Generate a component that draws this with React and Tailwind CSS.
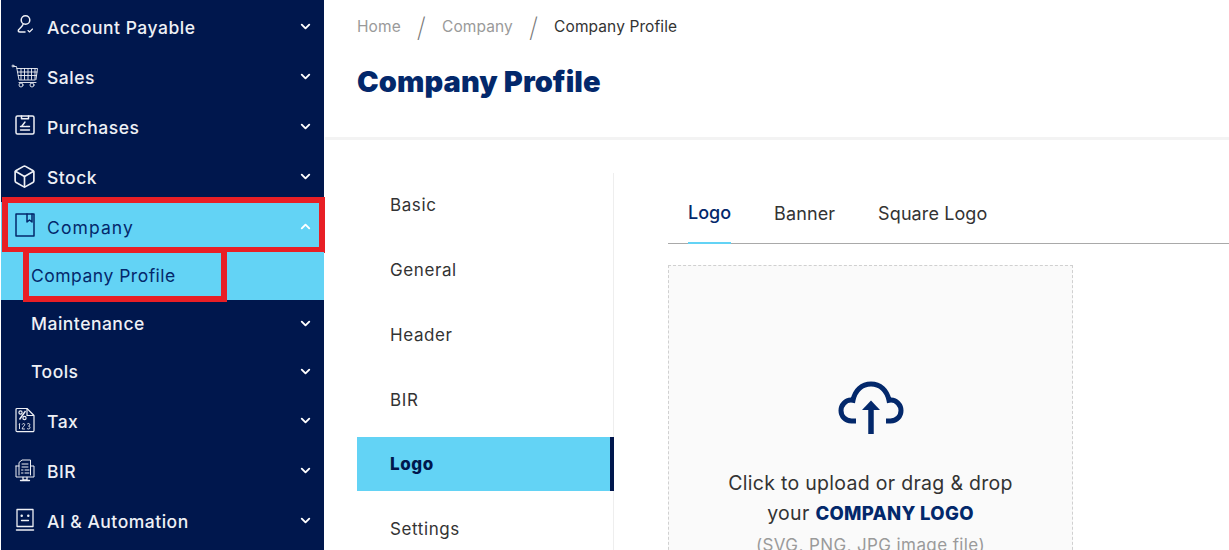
import React from "react";
import { ChevronDown, ChevronUp, Box } from "lucide-react";

const I = ({ children, w = 24, h = 24, vb = "0 0 24 24", sw = 1.5 }) => (
  <svg width={w} height={h} viewBox={vb} fill="none" stroke="currentColor" strokeWidth={sw} strokeLinecap="round" strokeLinejoin="round">
    {children}
  </svg>
);

const PayIcon = () => (
  <I>
    <circle cx="12.5" cy="6" r="4.3" />
    <path d="M10 10.500 C9 13 7 14 5.500 16 C5 17.500 5.500 18 7 18 H12" />
    <path d="M15 16.500l1.500 1.500 3-3" strokeWidth="1.1" />
  </I>
);
const CartIcon = () => (
  <I w={28} h={24} vb="0 0 28 24" sw={0.9}>
    <circle cx="2" cy="2" r="1" />
    <path d="M3 2.500h2.500l2.500 13.500h16" />
    <path d="M6 4.500h20.500l-1.500 11" />
    <path d="M6.600 8h19.400M7.200 11.500h18.300M10 4.500v11M13.500 4.500v11M17 4.500v11M20.500 4.500v11M24 4.500v11" />
    <path d="M8 18.500h17" />
    <circle cx="10" cy="21" r="2" />
    <circle cx="21" cy="21" r="2" />
  </I>
);
const PurchIcon = () => (
  <I>
    <rect x="3" y="2" width="18" height="18" rx="1.500" />
    <path d="M8.500 2v2.800h7V2" />
    <path d="M7.500 16h9M7.500 12.500h4.500M12 8l-3.500 4.500M13 12.500h3.500" strokeWidth="1.4" />
  </I>
);
const BookIcon = () => (
  <I sw={1.5}>
    <path d="M3 1h18v22H3z" />
    <path d="M14 1v8l2.500-2 2.500 2V1" />
  </I>
);
const TaxIcon = () => (
  <svg width="24" height="26" viewBox="0 0 24 26" fill="none" stroke="currentColor" strokeWidth="1.2" strokeLinejoin="round">
    <path d="M4 1.500h10l7 7v15a1.200 1.200 0 0 1-1.200 1.200H4.200A1.200 1.200 0 0 1 3 23.500V2.500a1 1 0 0 1 1-1z" />
    <path d="M14 1.500v7h7" />
    <path d="M12.500 4L6.500 12.500" strokeWidth="1.4" />
    <circle cx="7.500" cy="5.500" r="1.600" />
    <circle cx="11.500" cy="11" r="1.600" />
    <path d="M6.500 16.500v5.500M6 17.300l.7-.8M9.200 17.600c.4-1.400 2.500-1.400 2.500 0 0 1.400-2.500 2.600-2.500 4.400h2.700M14.200 17.200c.6-1.200 2.600-.9 2.600.5 0 1.200-1.300 1.400-1.300 1.400s1.500.1 1.500 1.500c0 1.700-2.400 1.800-3 .6" strokeWidth="0.9" />
  </svg>
);
const BirIcon = () => (
  <I sw={1}>
    <path d="M6 17V4.500L9 2h8.500v15" />
    <path d="M3 8h3M18 8h3v11H3V8" />
    <path d="M9 6h6M9 9h6M12 12h4M12 15h4M8.500 12h1.500M8.500 15h1.500" />
    <path d="M10 19.500v2.500h4v-2.500M7.500 22.500h9" strokeWidth="1.3" />
  </I>
);
const AiIcon = () => (
  <I sw={1.3}>
    <path d="M4 1.500h16v17H4z" />
    <path d="M3.500 22h17" strokeWidth="1.500" />
    <path d="M8.500 12.500h7" />
    <circle cx="8.700" cy="7.800" r="0.6" fill="currentColor" />
    <circle cx="15.300" cy="7.800" r="0.6" fill="currentColor" />
  </I>
);

const Item = ({ icon, label, active, sub, red, h = "h-[50px]", iconUp = "-mt-[2px]", track }) => (
  <div className={`relative flex items-center justify-between ${h} pr-[11px] ${sub ? "pl-[30px]" : "pl-[12px]"} ${active ? "bg-[#63d3f5] text-[#03286b]" : "text-[#eef0f5]"}`}>
    <div className="flex items-center">
      {icon && <span className={`flex w-[34px] ${iconUp} items-center`}>{icon}</span>}
      <span className={`${active ? "font-normal" : "font-medium"} ${track || "tracking-[0.5px]"} ${sub ? "" : "pt-[1px]"} text-[17.5px] leading-6`}>{label}</span>
    </div>
    {!(sub && active) && (active ? <ChevronUp size={15} strokeWidth={3} className="-mt-[1px] text-white" /> : <ChevronDown size={15} strokeWidth={3} className="-mt-[1px] text-white" />)}
    {red}
  </div>
);

const SideTab = ({ label, active }) => (
  <div className={`flex items-center pl-[33px] ${active ? "mt-[4px] mb-[6px] h-[54px] -mr-px border-r-4 border-[#00174d] bg-[#63d3f5] pt-px font-extrabold text-[#00174d]" : "h-[65px] text-[#333333]"} text-[17px] tracking-[0.6px]`}>
    {label}
  </div>
);

export default function App() {
  return (
    <div className="flex h-[550px] w-[1229px] overflow-hidden bg-white font-['Inter','Liberation_Sans',sans-serif]">
      <aside className="ml-px flex w-[323px] shrink-0 flex-col bg-[#00174d] pt-[2px]">
        <Item icon={<PayIcon />} label="Account Payable" />
        <Item icon={<span className="-ml-[2px]"><CartIcon /></span>} label="Sales" />
        <Item icon={<PurchIcon />} label="Purchases" />
        <Item icon={<Box size={25} strokeWidth={1.6} className="-ml-[1px]" />} label="Stock" />
        <Item
          icon={<BookIcon />}
          label="Company"
          active
          iconUp="-mt-[5px]"
          track="tracking-[1.1px]"
          red={<div className="pointer-events-none absolute -top-[5px] left-px -right-[1px] -bottom-[1px] border-[6px] border-[#e81f25]" />}
        />
        <Item
          label="Company Profile"
          active
          sub
          h="h-[48px]"
          red={<div className="pointer-events-none absolute -top-[1px] left-[22px] h-[51px] w-[204px] border-[6px] border-t-[2px] border-[#e81f25]" />}
        />
        <Item label="Maintenance" sub h="h-[48px]" />
        <Item label="Tools" sub h="h-[48px]" />
        <Item icon={<TaxIcon />} label="Tax" iconUp="-mt-[3px]" />
        <Item icon={<BirIcon />} label="BIR" />
        <Item icon={<AiIcon />} label="AI & Automation" />
      </aside>

      <main className="ml-px min-w-0 flex-1">
        <header className="h-[140px] border-b-[3px] border-[#f3f3f3] pl-[32px] pt-[16px]">
          <nav className="flex h-[22px] items-center text-[15.5px] tracking-[0.1px]">
            <span className="text-[#9a9a9a]">Home</span>
            <span className="mx-[16px] text-[27px] font-extralight leading-none text-[#777777]">/</span>
            <span className="text-[#9a9a9a]">Company</span>
            <span className="mx-[16px] text-[27px] font-extralight leading-none text-[#777777]">/</span>
            <span className="text-[#333333]">Company Profile</span>
          </nav>
          <h1 className="mt-[26px] text-[29px] font-black leading-9 tracking-[0.1px] text-[#03286b]">Company Profile</h1>
        </header>

        <div className="flex pl-[32px] pt-[33px]">
          <div className="h-[378px] w-[257px] shrink-0 border-r border-[#eeeeee]">
            <SideTab label="Basic" />
            <SideTab label="General" />
            <SideTab label="Header" />
            <SideTab label="BIR" />
            <SideTab label="Logo" active />
            <SideTab label="Settings" />
          </div>

          <div className="ml-[54px] flex-1">
            <div className="flex h-[71px] gap-[43px] border-b border-[#a9a9a9] pl-[20px] text-[18px] tracking-[0.1px] text-[#333333]">
              <div className="-mb-px flex h-[71px] items-center border-b-[2px] border-[#63d3f5] pt-[9px] font-medium tracking-normal text-[#03286b]">Logo</div>
              <div className="flex h-[70px] items-center pt-[10px]">Banner</div>
              <div className="flex h-[70px] items-center pt-[10px]">Square Logo</div>
            </div>
            <div className="mt-[21px] flex h-[300px] w-[405px] flex-col items-center border border-dashed border-[#d0d0d0] bg-[#fafafa] pt-[114px] text-center">
              <svg width="66" height="54" viewBox="0 0 66 54" fill="none" stroke="#03286b" strokeWidth="5">
                <path d="M18 41h-4.500C7 41 3 36 3 30.500S7.500 20 13 20c1 0 1.500.2 2 .3C17 10 24 4 33 4s16 6 18 16.300c.5-.1 1-.3 2-.3 5.500 0 10 5 10 10.500S59 41 52.500 41H48" />
                <path d="M33 54V26" strokeWidth="5.500" />
                <path d="M24 30l9-9.500 9 9.500z" fill="#03286b" stroke="none" />
              </svg>
              <p className="mt-[34px] text-[19.5px] leading-[30px] tracking-[0.3px] text-[#333333]">
                Click to upload or drag &amp; drop
                <br />
                your <b className="text-[18.5px] font-extrabold text-[#03286b]">COMPANY LOGO</b>
              </p>
              <p className="mt-[5px] text-[17px] tracking-[0.4px] text-[#9a9a9a]">(SVG, PNG, JPG image file)</p>
            </div>
          </div>
        </div>
      </main>
    </div>
  );
}
